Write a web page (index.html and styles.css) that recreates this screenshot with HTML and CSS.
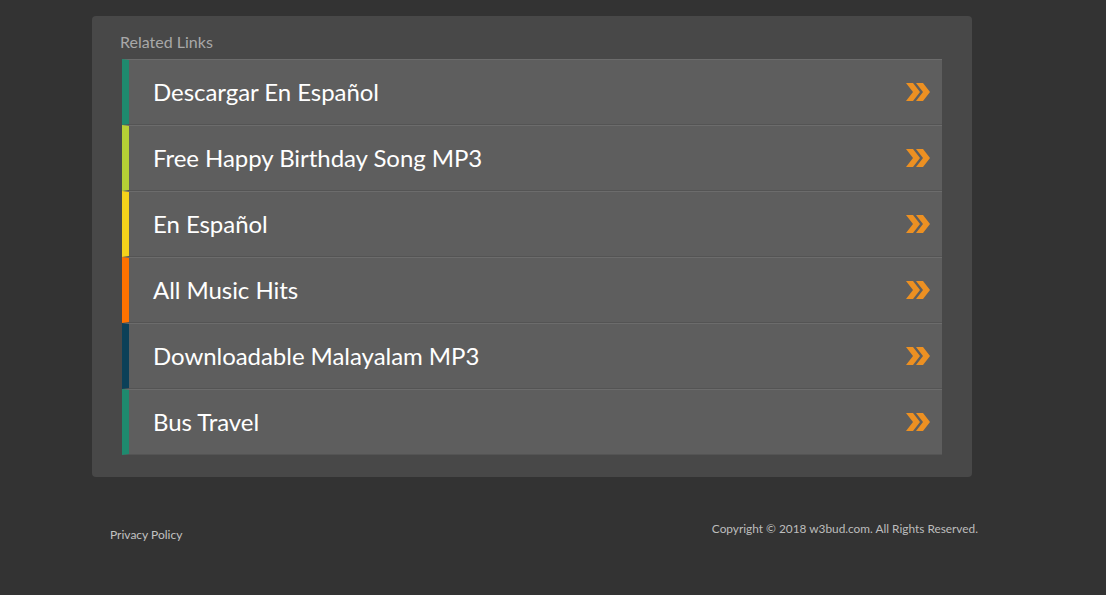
FILE: index.html
```html
<!DOCTYPE html>
<html lang="en">
<head>
    <meta charset="UTF-8">
    <title>Related Links</title>
    <link rel="stylesheet" href="styles.css">
</head>
<body>
    <div class="wrap">
        <div class="card">
            <div class="card-title">Related Links</div>
            <ul class="links">
                <li class="link c-teal"><span>Descargar En Español</span><svg class="arrow" viewBox="0 0 24 20"><path d="M0 1h7l7 9-7 9H0l7-9z"/><path d="M10 1h7l7 9-7 9h-7l7-9z"/></svg></li>
                <li class="link c-lime"><span>Free Happy Birthday Song MP3</span><svg class="arrow" viewBox="0 0 24 20"><path d="M0 1h7l7 9-7 9H0l7-9z"/><path d="M10 1h7l7 9-7 9h-7l7-9z"/></svg></li>
                <li class="link c-yellow"><span>En Español</span><svg class="arrow" viewBox="0 0 24 20"><path d="M0 1h7l7 9-7 9H0l7-9z"/><path d="M10 1h7l7 9-7 9h-7l7-9z"/></svg></li>
                <li class="link c-orange"><span>All Music Hits</span><svg class="arrow" viewBox="0 0 24 20"><path d="M0 1h7l7 9-7 9H0l7-9z"/><path d="M10 1h7l7 9-7 9h-7l7-9z"/></svg></li>
                <li class="link c-navy"><span>Downloadable Malayalam MP3</span><svg class="arrow" viewBox="0 0 24 20"><path d="M0 1h7l7 9-7 9H0l7-9z"/><path d="M10 1h7l7 9-7 9h-7l7-9z"/></svg></li>
                <li class="link c-teal"><span>Bus Travel</span><svg class="arrow" viewBox="0 0 24 20"><path d="M0 1h7l7 9-7 9H0l7-9z"/><path d="M10 1h7l7 9-7 9h-7l7-9z"/></svg></li>
            </ul>
        </div>
        <div class="footer">
            <a class="privacy" href="#">Privacy Policy</a>
            <div class="copy">Copyright © 2018 w3bud.com. All Rights Reserved.</div>
        </div>
    </div>
</body>
</html>
```

FILE: styles.css
```css
body {
    margin: 0;
    background: #333333;
    font-family: Lato, 'Open Sans', sans-serif;
}

.wrap {
    width: 880px;
    margin-left: 92px;
    padding-top: 16px;
}

.card {
    background: #484848;
    border-radius: 4px;
    padding: 16px 30px 22px 28px;
}

.card-title {
    color: #a8a8a8;
    font-size: 16px;
    line-height: 20px;
    margin-bottom: 7px;
}

.links {
    list-style: none;
    margin: 0 0 0 2px;
    padding: 0;
}

.link {
    display: flex;
    align-items: center;
    justify-content: space-between;
    height: 64px;
    background: #5e5e5e;
    border-top: 1px solid #6c6c6c;
    border-bottom: 1px solid #545454;
    border-left: 7px solid #1e8a6e;
    padding: 0 12px 0 24px;
    color: #ffffff;
    font-size: 24px;
}

.link span {
    padding-bottom: 2px;
    letter-spacing: -0.05px;
}

.arrow {
    width: 24px;
    height: 20px;
    fill: #ec9022;
}

.c-teal { border-left-color: #1e8a6e; }
.c-lime { border-left-color: #b6cf35; }
.c-yellow { border-left-color: #f5d21b; }
.c-orange { border-left-color: #ff7200; }
.c-navy { border-left-color: #0c4058; }

.footer {
    display: flex;
    justify-content: space-between;
    align-items: flex-start;
    padding: 44px 0 0 18px;
    margin-right: -6px;
}

.privacy {
    color: #c2c2c2;
    font-size: 12px;
    text-decoration: none;
    margin-top: 6px;
}

.copy {
    color: #bdbdbd;
    font-size: 11.85px;
}
```
